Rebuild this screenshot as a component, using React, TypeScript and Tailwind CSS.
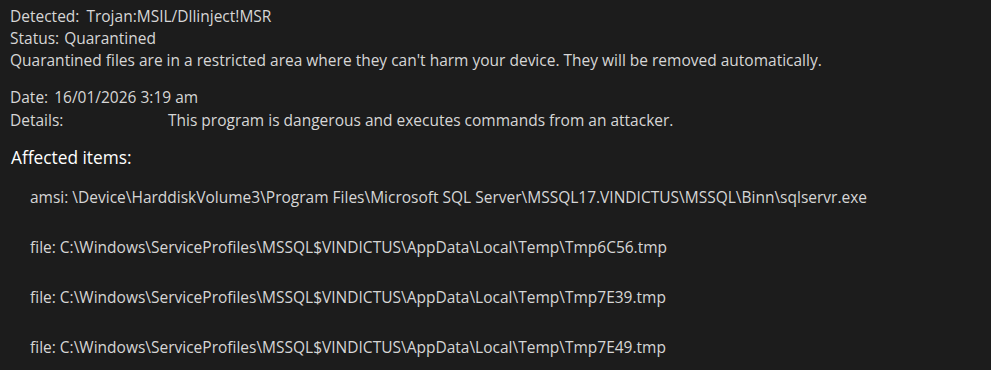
export default function App() {
  const items = [
    "amsi: \\Device\\HarddiskVolume3\\Program Files\\Microsoft SQL Server\\MSSQL17.VINDICTUS\\MSSQL\\Binn\\sqlservr.exe",
    "file: C:\\Windows\\ServiceProfiles\\MSSQL$VINDICTUS\\AppData\\Local\\Temp\\Tmp6C56.tmp",
    "file: C:\\Windows\\ServiceProfiles\\MSSQL$VINDICTUS\\AppData\\Local\\Temp\\Tmp7E39.tmp",
    "file: C:\\Windows\\ServiceProfiles\\MSSQL$VINDICTUS\\AppData\\Local\\Temp\\Tmp7E49.tmp",
  ];
  return (
    <div
      className="bg-[#1c1c1c] text-[#d6d6d6] w-[991px] h-[370px] overflow-hidden text-[15.5px] leading-[22px] whitespace-nowrap"
      style={{ fontFamily: "'Open Sans', 'Noto Sans', sans-serif" }}
    >
      <div className="pt-[5px] pl-[10px]">
        <div>
          Detected: <span className="ml-[3px]">Trojan:MSIL/Dllinject!MSR</span>
        </div>
        <div>
          Status: <span className="ml-[1px]">Quarantined</span>
        </div>
        <div>Quarantined files are in a restricted area where they can't harm your device. They will be removed automatically.</div>
        <div className="mt-[15px]">
          Date: <span className="ml-[2px]">16/01/2026 3:19 am</span>
        </div>
        <div className="mt-[1px] flex">
          <div className="w-[158px]">Details:</div>
          <div>This program is dangerous and executes commands from an attacker.</div>
        </div>
      </div>
      <div className="mt-[15px] pl-[11px] text-[17.3px] leading-[24px] text-white">Affected items:</div>
      <div className="mt-[16px] pl-[30px] flex flex-col gap-[28px]">
        {items.map((it) => (
          <div key={it}>{it}</div>
        ))}
      </div>
    </div>
  );
}
